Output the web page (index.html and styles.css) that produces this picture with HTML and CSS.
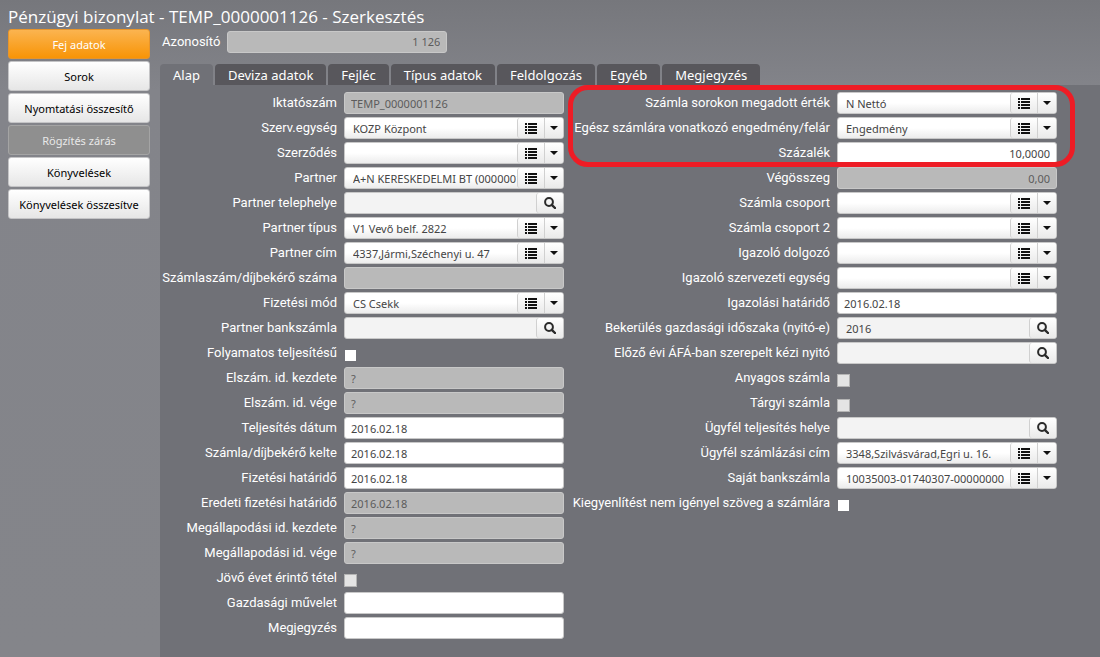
FILE: index.html
```html
<!DOCTYPE html>
<html lang="hu">
<head>
<meta charset="utf-8">
<title>Pénzügyi bizonylat - TEMP_0000001126 - Szerkesztés</title>
<link rel="stylesheet" href="styles.css">
</head>
<body>
<svg class="sprite" aria-hidden="true">
  <symbol id="list" viewBox="0 0 12 11">
    <path d="M0 0h2v2H0zM3 0h9v2H3zM0 3h2v2H0zM3 3h9v2H3zM0 6h2v2H0zM3 6h9v2H3zM0 9h2v2H0zM3 9h9v2H3z"/>
  </symbol>
  <symbol id="caret" viewBox="0 0 8 4"><path d="M0 0h8L4 4z"/></symbol>
  <symbol id="search" viewBox="0 0 12 12">
    <circle cx="5" cy="5" r="3.9" fill="none" stroke="currentColor" stroke-width="2"/>
    <path d="M7.8 7.8L11 11" fill="none" stroke="currentColor" stroke-width="2.4" stroke-linecap="round"/>
  </symbol>
</svg>
<h1 class="title">Pénzügyi bizonylat - TEMP_0000001126 - Szerkesztés</h1>
<div class="layout">
  <nav class="menu">
    <button class="menu-item active">Fej adatok</button>
    <button class="menu-item">Sorok</button>
    <button class="menu-item">Nyomtatási összesítő</button>
    <button class="menu-item" disabled>Rögzítés zárás</button>
    <button class="menu-item">Könyvelések</button>
    <button class="menu-item">Könyvelések összesítve</button>
  </nav>
  <main class="main">
    <div class="identity">
      <label for="azon">Azonosító</label>
      <input class="text number" id="azon" value="1 126" disabled>
    </div>
    <div class="tabs" role="tablist">
      <button class="tab selected" role="tab" aria-selected="true">Alap</button>
      <button class="tab" role="tab">Deviza adatok</button>
      <button class="tab" role="tab">Fejléc</button>
      <button class="tab" role="tab">Típus adatok</button>
      <button class="tab" role="tab">Feldolgozás</button>
      <button class="tab" role="tab">Egyéb</button>
      <button class="tab" role="tab">Megjegyzés</button>
    </div>
    <form class="panel">
      <div class="column">
        <div class="row"><label for="a1">Iktatószám</label><input class="text" id="a1" value="TEMP_0000001126" disabled></div>
        <div class="row"><label for="a2">Szerv.egység</label><div class="combo"><input id="a2" value="KOZP Központ"><button type="button" class="pick" aria-label="Lista"><svg class="i-list"><use href="#list"/></svg></button><button type="button" class="drop" aria-label="Lenyit"><svg class="i-caret"><use href="#caret"/></svg></button></div></div>
        <div class="row"><label for="a3">Szerződés</label><div class="combo"><input id="a3"><button type="button" class="pick" aria-label="Lista"><svg class="i-list"><use href="#list"/></svg></button><button type="button" class="drop" aria-label="Lenyit"><svg class="i-caret"><use href="#caret"/></svg></button></div></div>
        <div class="row"><label for="a4">Partner</label><div class="combo"><input id="a4" value="A+N KERESKEDELMI BT (0000001)"><button type="button" class="pick" aria-label="Lista"><svg class="i-list"><use href="#list"/></svg></button><button type="button" class="drop" aria-label="Lenyit"><svg class="i-caret"><use href="#caret"/></svg></button></div></div>
        <div class="row"><label for="a5">Partner telephelye</label><div class="combo lookup"><input id="a5"><button type="button" class="find" aria-label="Keresés"><svg class="i-search"><use href="#search"/></svg></button></div></div>
        <div class="row"><label for="a6">Partner típus</label><div class="combo"><input id="a6" value="V1 Vevő belf. 2822"><button type="button" class="pick" aria-label="Lista"><svg class="i-list"><use href="#list"/></svg></button><button type="button" class="drop" aria-label="Lenyit"><svg class="i-caret"><use href="#caret"/></svg></button></div></div>
        <div class="row"><label for="a7">Partner cím</label><div class="combo"><input id="a7" value="4337,Jármi,Széchenyi u. 47"><button type="button" class="pick" aria-label="Lista"><svg class="i-list"><use href="#list"/></svg></button><button type="button" class="drop" aria-label="Lenyit"><svg class="i-caret"><use href="#caret"/></svg></button></div></div>
        <div class="row"><label for="a8">Számlaszám/díjbekérő száma</label><input class="text" id="a8" disabled></div>
        <div class="row"><label for="a9">Fizetési mód</label><div class="combo"><input id="a9" value="CS Csekk"><button type="button" class="pick" aria-label="Lista"><svg class="i-list"><use href="#list"/></svg></button><button type="button" class="drop" aria-label="Lenyit"><svg class="i-caret"><use href="#caret"/></svg></button></div></div>
        <div class="row"><label for="a10">Partner bankszámla</label><div class="combo lookup"><input id="a10"><button type="button" class="find" aria-label="Keresés"><svg class="i-search"><use href="#search"/></svg></button></div></div>
        <div class="row"><label for="a11">Folyamatos teljesítésű</label><input type="checkbox" class="check" id="a11"></div>
        <div class="row"><label for="a12">Elszám. id. kezdete</label><input class="text" id="a12" value="?" disabled></div>
        <div class="row"><label for="a13">Elszám. id. vége</label><input class="text" id="a13" value="?" disabled></div>
        <div class="row"><label for="a14">Teljesítés dátum</label><input class="text" id="a14" value="2016.02.18"></div>
        <div class="row"><label for="a15">Számla/díjbekérő kelte</label><input class="text" id="a15" value="2016.02.18"></div>
        <div class="row"><label for="a16">Fizetési határidő</label><input class="text" id="a16" value="2016.02.18"></div>
        <div class="row"><label for="a17">Eredeti fizetési határidő</label><input class="text" id="a17" value="2016.02.18" disabled></div>
        <div class="row"><label for="a18">Megállapodási id. kezdete</label><input class="text" id="a18" value="?" disabled></div>
        <div class="row"><label for="a19">Megállapodási id. vége</label><input class="text" id="a19" value="?" disabled></div>
        <div class="row"><label for="a20">Jövő évet érintő tétel</label><input type="checkbox" class="check" id="a20" disabled></div>
        <div class="row"><label for="a21">Gazdasági művelet</label><input class="text" id="a21"></div>
        <div class="row"><label for="a22">Megjegyzés</label><input class="text" id="a22"></div>
      </div>
      <div class="column wide">
        <div class="highlight">
          <div class="row"><label for="b1">Számla sorokon megadott érték</label><div class="combo"><input id="b1" value="N Nettó"><button type="button" class="pick" aria-label="Lista"><svg class="i-list"><use href="#list"/></svg></button><button type="button" class="drop" aria-label="Lenyit"><svg class="i-caret"><use href="#caret"/></svg></button></div></div>
          <div class="row"><label for="b2">Egész számlára vonatkozó engedmény/felár</label><div class="combo"><input id="b2" value="Engedmény"><button type="button" class="pick" aria-label="Lista"><svg class="i-list"><use href="#list"/></svg></button><button type="button" class="drop" aria-label="Lenyit"><svg class="i-caret"><use href="#caret"/></svg></button></div></div>
          <div class="row"><label for="b3">Százalék</label><input class="text number" id="b3" value="10,0000"></div>
        </div>
        <div class="row"><label for="b4">Végösszeg</label><input class="text number" id="b4" value="0,00" disabled></div>
        <div class="row"><label for="b5">Számla csoport</label><div class="combo"><input id="b5"><button type="button" class="pick" aria-label="Lista"><svg class="i-list"><use href="#list"/></svg></button><button type="button" class="drop" aria-label="Lenyit"><svg class="i-caret"><use href="#caret"/></svg></button></div></div>
        <div class="row"><label for="b6">Számla csoport 2</label><div class="combo"><input id="b6"><button type="button" class="pick" aria-label="Lista"><svg class="i-list"><use href="#list"/></svg></button><button type="button" class="drop" aria-label="Lenyit"><svg class="i-caret"><use href="#caret"/></svg></button></div></div>
        <div class="row"><label for="b7">Igazoló dolgozó</label><div class="combo"><input id="b7"><button type="button" class="pick" aria-label="Lista"><svg class="i-list"><use href="#list"/></svg></button><button type="button" class="drop" aria-label="Lenyit"><svg class="i-caret"><use href="#caret"/></svg></button></div></div>
        <div class="row"><label for="b8">Igazoló szervezeti egység</label><div class="combo"><input id="b8"><button type="button" class="pick" aria-label="Lista"><svg class="i-list"><use href="#list"/></svg></button><button type="button" class="drop" aria-label="Lenyit"><svg class="i-caret"><use href="#caret"/></svg></button></div></div>
        <div class="row"><label for="b9">Igazolási határidő</label><input class="text" id="b9" value="2016.02.18"></div>
        <div class="row"><label for="b10">Bekerülés gazdasági időszaka (nyitó-e)</label><div class="combo lookup"><input id="b10" value="2016"><button type="button" class="find" aria-label="Keresés"><svg class="i-search"><use href="#search"/></svg></button></div></div>
        <div class="row"><label for="b11">Előző évi ÁFÁ-ban szerepelt kézi nyitó</label><div class="combo lookup"><input id="b11"><button type="button" class="find" aria-label="Keresés"><svg class="i-search"><use href="#search"/></svg></button></div></div>
        <div class="row"><label for="b12">Anyagos számla</label><input type="checkbox" class="check" id="b12" disabled></div>
        <div class="row"><label for="b13">Tárgyi számla</label><input type="checkbox" class="check" id="b13" disabled></div>
        <div class="row"><label for="b14">Ügyfél teljesítés helye</label><div class="combo lookup"><input id="b14"><button type="button" class="find" aria-label="Keresés"><svg class="i-search"><use href="#search"/></svg></button></div></div>
        <div class="row"><label for="b15">Ügyfél számlázási cím</label><div class="combo"><input id="b15" value="3348,Szilvásvárad,Egri u. 16."><button type="button" class="pick" aria-label="Lista"><svg class="i-list"><use href="#list"/></svg></button><button type="button" class="drop" aria-label="Lenyit"><svg class="i-caret"><use href="#caret"/></svg></button></div></div>
        <div class="row"><label for="b16">Saját bankszámla</label><div class="combo"><input id="b16" value="10035003-01740307-00000000"><button type="button" class="pick" aria-label="Lista"><svg class="i-list"><use href="#list"/></svg></button><button type="button" class="drop" aria-label="Lenyit"><svg class="i-caret"><use href="#caret"/></svg></button></div></div>
        <div class="row"><label for="b17">Kiegyenlítést nem igényel szöveg a számlára</label><input type="checkbox" class="check" id="b17"></div>
      </div>
    </form>
  </main>
</div>
</body>
</html>
```
FILE: styles.css
```css
* { box-sizing: border-box; }

body {
  margin: 0;
  min-height: 100vh;
  display: flex;
  flex-direction: column;
  color: #fff;
  font-family: Roboto, "Open Sans", sans-serif;
  font-size: 13px;
  background: linear-gradient(#76777c, #83848a 90px, #84858a);
}

button, input { font: inherit; margin: 0; }
.sprite { display: none; }

.title {
  margin: 0;
  padding: 4px 8px 0;
  font-family: "Open Sans", sans-serif;
  font-size: 17px;
  font-weight: 400;
  line-height: 25px;
}

.layout { flex: 1; display: flex; gap: 10px; padding-left: 8px; }

.menu { width: 142px; flex: none; display: flex; flex-direction: column; gap: 2px; }
.menu-item {
  height: 30px;
  padding: 0;
  font-family: "Noto Sans", sans-serif;
  font-size: 11px;
  color: #000;
  border: 1px solid #c4c4c6;
  border-radius: 3px;
  background: linear-gradient(#fff, #e6e6e6);
}
.menu-item.active {
  color: #fff;
  border-color: #e8952a;
  background: linear-gradient(#fbb450, #f89406);
}
.menu-item:disabled { color: #e8e8e8; border-color: #a4a4a4; background: #8f8f8f; }

.main { flex: 1; min-width: 0; display: flex; flex-direction: column; }

.identity { display: flex; gap: 7px; padding: 2px 0 0 2px; line-height: 22px; }

.tabs { display: flex; gap: 2px; margin-top: 11px; }
.tab {
  height: 21px;
  padding: 0 13px;
  border: 0;
  border-radius: 4px 4px 0 0;
  color: #fff;
  background: #58575c;
  font-family: "Noto Sans", sans-serif;
  font-size: 13px;
  line-height: 23px;
}
.tab.selected { background: #707177; }

.panel {
  flex: 1;
  display: flex;
  gap: 6px;
  padding: 7px 0 16px 2px;
  background: #707177;
}
.row { display: flex; gap: 7px; height: 22px; margin-bottom: 3px; }
.row label {
  display: flex;
  justify-content: flex-end;
  width: 175px;
  white-space: nowrap;
  line-height: 21px;
}
.wide .row label { width: 260px; }

.text {
  width: 220px;
  height: 22px;
  padding: 0 6px;
  color: #444;
  border: 1px solid #c8c8c8;
  border-radius: 3px;
  background: #fff;
  font-family: "Noto Sans", sans-serif;
  font-size: 11px;
}
.text:disabled { color: #5c5c5c; background: #b9b9b9; }
.number { text-align: right; }

.combo {
  width: 220px;
  display: flex;
  overflow: hidden;
  border: 1px solid #c8c8c8;
  border-radius: 3px;
  background: linear-gradient(#fff, #fff 50%, #ececec);
}
.combo input {
  flex: 1;
  min-width: 0;
  padding: 0 0 0 8px;
  border: 0;
  background: none;
  color: #444;
  font-family: "Noto Sans", sans-serif;
  font-size: 11px;
}
.combo.lookup { background: #f3f3f3; }
.combo button {
  display: flex;
  align-items: center;
  justify-content: center;
  padding: 0;
  border: 0;
  border-left: 1px solid #d0d0d0;
  color: #111;
  background: linear-gradient(#fff, #eaeaea);
}
.combo .pick { width: 27px; border-radius: 3px 0 0 3px; }
.combo .drop { width: 19px; }
.combo .find { width: 27px; border-radius: 3px 0 0 3px; color: #2b2b2b; }
.i-list { width: 12px; height: 11px; fill: currentColor; }
.i-caret { width: 8px; height: 4px; fill: currentColor; }
.i-search { width: 12px; height: 12px; }

.check {
  appearance: none;
  width: 13px;
  height: 13px;
  margin-top: 7px;
  border: 1px solid #707177;
  background: #fff;
}
.check:disabled { border-color: #b4b4b4; background: #e4e4e4; }

.highlight { position: relative; }
.highlight::after {
  content: "";
  position: absolute;
  inset: -7px -18px -3px -2px;
  border: 5px solid #ee1c25;
  border-radius: 20px;
  pointer-events: none;
}
```
